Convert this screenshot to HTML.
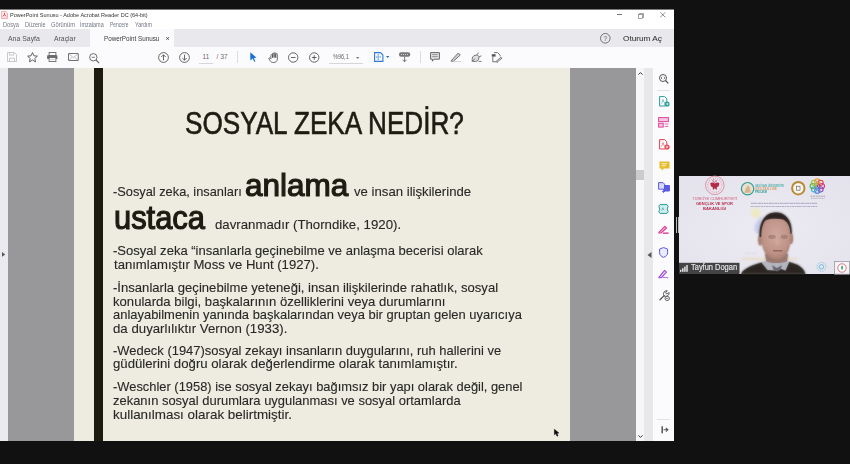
<!DOCTYPE html>
<html><head><meta charset="utf-8">
<style>
*{margin:0;padding:0;box-sizing:border-box}
html,body{width:850px;height:464px;overflow:hidden;background:#111111;font-family:"Liberation Sans",sans-serif}
.a{position:absolute}
.t{position:absolute;white-space:nowrap;transform-origin:0 0;line-height:1}
svg{position:absolute;overflow:visible}
</style></head><body>
<!-- app window -->
<div class="a" style="left:0;top:9px;width:674px;height:1px;background:#7a7a7a"></div>
<div class="a" style="left:0;top:10px;width:674px;height:19px;background:#ffffff"></div>
<div class="a" style="left:0;top:29px;width:674px;height:18px;background:#e9e8ec"></div>
<div class="a" style="left:90px;top:29px;width:84px;height:18px;background:#fbfbfd"></div>
<div class="a" style="left:0;top:47px;width:674px;height:21px;background:#fbfbfd"></div>
<div class="a" style="left:0;top:68px;width:8px;height:373px;background:#ebeaee"></div>
<div class="a" style="left:8px;top:68px;width:628px;height:373px;background:#98979a"></div>
<div class="a" style="left:636px;top:68px;width:8px;height:373px;background:#f6f6f8"></div>
<div class="a" style="left:636px;top:170px;width:7.5px;height:9.5px;background:#cbcbcd"></div>
<div class="a" style="left:644px;top:68px;width:9px;height:373px;background:#e8e7ea"></div>
<div class="a" style="left:653px;top:68px;width:21px;height:373px;background:#fbfbfd"></div>
<!-- slide -->
<div class="a" style="left:74px;top:68px;width:496px;height:373px;background:#eeece1"></div>
<div class="a" style="left:94px;top:68px;width:9px;height:373px;background:#1c1b0f"></div>
<div id="slidetext">
<div class="t" style="left:113.05px;top:184.80px;font-size:13.5px;transform:scaleX(0.9478);color:#282826;-webkit-text-stroke:0.12px #282826">-Sosyal zeka, insanları</div>
<div class="t" style="left:244.98px;top:169.50px;font-size:31px;transform:scaleX(1.0168);color:#1d1c12;-webkit-text-stroke:1.2px #1d1c12">anlama</div>
<div class="t" style="left:353.50px;top:185.00px;font-size:13.5px;transform:scaleX(0.9758);color:#282826;-webkit-text-stroke:0.12px #282826">ve insan ilişkilerinde</div>
<div class="t" style="left:113.63px;top:200.70px;font-size:33px;transform:scaleX(0.9354);color:#1d1c12;-webkit-text-stroke:1.2px #1d1c12">ustaca</div>
<div class="t" style="left:214.52px;top:217.80px;font-size:13.5px;transform:scaleX(0.9803);color:#282826;-webkit-text-stroke:0.12px #282826">davranmadır (Thorndike, 1920).</div>
<div class="t" style="left:113.03px;top:244.30px;font-size:13.5px;transform:scaleX(0.9660);color:#282826;-webkit-text-stroke:0.12px #282826">-Sosyal zeka “insanlarla geçinebilme ve anlaşma becerisi olarak</div>
<div class="t" style="left:114.00px;top:258.40px;font-size:13.5px;transform:scaleX(0.9714);color:#282826;-webkit-text-stroke:0.12px #282826">tanımlamıştır Moss ve Hunt (1927).</div>
<div class="t" style="left:113.03px;top:281.00px;font-size:13.5px;transform:scaleX(0.9701);color:#282826;-webkit-text-stroke:0.12px #282826">-İnsanlarla geçinebilme yeteneği, insan ilişkilerinde rahatlık, sosyal</div>
<div class="t" style="left:113.03px;top:294.60px;font-size:13.5px;transform:scaleX(0.9712);color:#282826;-webkit-text-stroke:0.12px #282826">konularda bilgi, başkalarının özelliklerini veya durumlarını</div>
<div class="t" style="left:113.04px;top:308.20px;font-size:13.5px;transform:scaleX(0.9591);color:#282826;-webkit-text-stroke:0.12px #282826">anlayabilmenin yanında başkalarından veya bir gruptan gelen uyarıcıya</div>
<div class="t" style="left:113.02px;top:321.60px;font-size:13.5px;transform:scaleX(0.9807);color:#282826;-webkit-text-stroke:0.12px #282826">da duyarlılıktır Vernon (1933).</div>
<div class="t" style="left:113.04px;top:343.50px;font-size:13.5px;transform:scaleX(0.9584);color:#282826;-webkit-text-stroke:0.12px #282826">-Wedeck (1947)sosyal zekayı insanların duygularını, ruh hallerini ve</div>
<div class="t" style="left:113.02px;top:357.40px;font-size:13.5px;transform:scaleX(0.9772);color:#282826;-webkit-text-stroke:0.12px #282826">güdülerini doğru olarak değerlendirme olarak tanımlamıştır.</div>
<div class="t" style="left:113.05px;top:380.00px;font-size:13.5px;transform:scaleX(0.9546);color:#282826;-webkit-text-stroke:0.12px #282826">-Weschler (1958) ise sosyal zekayı bağımsız bir yapı olarak değil, genel</div>
<div class="t" style="left:113.04px;top:393.90px;font-size:13.5px;transform:scaleX(0.9591);color:#282826;-webkit-text-stroke:0.12px #282826">zekanın sosyal durumlara uygulanması ve sosyal ortamlarda</div>
<div class="t" style="left:113.01px;top:407.50px;font-size:13.5px;transform:scaleX(0.9938);color:#282826;-webkit-text-stroke:0.12px #282826">kullanılması olarak belirtmiştir.</div>
<div class="t" style="left:185.37px;top:107.80px;font-size:31.5px;transform:scaleX(0.8296);color:#1d1c12;-webkit-text-stroke:0.6px #1d1c12">SOSYAL ZEKA NEDİR?</div>
</div>
<!-- CHROME -->
<div class="t" style="left:9.50px;top:12.60px;font-size:5.5px;transform:scaleX(1.0055);color:#333333">PowerPoint Sunusu - Adobe Acrobat Reader DC (64-bit)</div>
<div class="t" style="left:2.86px;top:21.55px;font-size:6.3px;transform:scaleX(0.8857);color:#737786">Dosya</div>
<div class="t" style="left:24.56px;top:21.55px;font-size:6.3px;transform:scaleX(0.8899);color:#737786">Düzenle</div>
<div class="t" style="left:50.57px;top:21.55px;font-size:6.3px;transform:scaleX(0.9137);color:#737786">Görünüm</div>
<div class="t" style="left:80.47px;top:21.55px;font-size:6.3px;transform:scaleX(0.8673);color:#737786">İmzalama</div>
<div class="t" style="left:110.40px;top:21.55px;font-size:6.3px;transform:scaleX(0.7912);color:#737786">Pencere</div>
<div class="t" style="left:135.09px;top:21.55px;font-size:6.3px;transform:scaleX(0.8571);color:#737786">Yardım</div>
<div class="t" style="left:8.00px;top:34.65px;font-size:7.5px;transform:scaleX(0.9209);color:#555555">Ana Sayfa</div>
<div class="t" style="left:54.10px;top:34.65px;font-size:7.5px;transform:scaleX(0.9137);color:#555555">Araçlar</div>
<div class="t" style="left:104.24px;top:35.85px;font-size:6.8px;transform:scaleX(0.9260);color:#3a3a3a">PowerPoint Sunusu</div>
<div class="t" style="left:623.42px;top:34.75px;font-size:7.4px;transform:scaleX(1.1101);color:#3a3a3a;-webkit-text-stroke:0.1px #3a3a3a">Oturum Aç</div>


<!-- title bar -->
<svg style="left:1px;top:11px" width="7" height="8" viewBox="0 0 7 8"><path d="M0.6 0.5h4.3l1.6 1.6v5.4h-5.9z" fill="#fff4f4" stroke="#f4a0a4" stroke-width="0.9"/><path d="M3.5 1.8L3.5 3.8M3.5 3.8L1.7 5.3M3.5 3.8L5.3 5.3" stroke="#e8403f" stroke-width="1"/><path d="M1.5 6.3h4" stroke="#f8c8c8" stroke-width="0.6"/></svg>
<div class="a" style="left:616.5px;top:14.3px;width:5px;height:0.7px;background:#777"></div>
<svg style="left:638px;top:12.5px" width="6" height="6" viewBox="0 0 6 6"><rect x="0.5" y="1.5" width="4" height="4" fill="none" stroke="#666" stroke-width="0.6"/><path d="M1.5 1.5V0.5h4v4h-1" fill="none" stroke="#666" stroke-width="0.6"/></svg>
<svg style="left:660px;top:12.3px" width="6" height="6" viewBox="0 0 6 6"><path d="M0.3 0.3L5.3 5.3M5.3 0.3L0.3 5.3" stroke="#555" stroke-width="0.65"/></svg>
<!-- menu -->
<!-- tabs -->
<svg style="left:166.4px;top:36.8px" width="3.2" height="3" viewBox="0 0 3.2 3"><path d="M0.2 0.2L3 2.8M3 0.2L0.2 2.8" stroke="#333" stroke-width="0.75"/></svg>
<svg style="left:599.5px;top:33px" width="11" height="11" viewBox="0 0 11 11"><circle cx="5.3" cy="5.3" r="4.8" fill="none" stroke="#555" stroke-width="0.8"/><text x="5.3" y="7.6" font-size="6.5" text-anchor="middle" fill="#555" font-family="Liberation Sans">?</text></svg>
<!-- toolbar -->
<svg style="left:6.5px;top:52.3px" width="10" height="10" viewBox="0 0 10 10"><path d="M0.5 0.5h7l2 2v7h-9z" fill="none" stroke="#c4c4c8" stroke-width="0.9"/><path d="M2.5 0.5v2.6h4.4v-2.6M2.5 9.5v-3.3h5v3.3" fill="none" stroke="#c4c4c8" stroke-width="0.9"/></svg>
<svg style="left:26.5px;top:51.8px" width="11" height="11" viewBox="0 0 11 11"><path d="M5.5 0.6l1.45 3.2l3.45 .35l-2.6 2.3l.75 3.4l-3.05-1.8l-3.05 1.8l.75-3.4l-2.6-2.3l3.45-.35z" fill="none" stroke="#555" stroke-width="0.9" stroke-linejoin="round"/></svg>
<svg style="left:47px;top:52px" width="11" height="10" viewBox="0 0 11 10"><rect x="2.1" y="0.5" width="6.8" height="3" fill="#fbfbfd" stroke="#6a6a6a" stroke-width="0.9"/><rect x="0.1" y="3.3" width="10.3" height="3.8" rx="0.6" fill="#6a6a6a"/><rect x="2.1" y="5.5" width="6.8" height="4" fill="#fbfbfd" stroke="#6a6a6a" stroke-width="0.9"/><path d="M3.5 7.4h4" stroke="#aaa" stroke-width="0.6"/></svg>
<svg style="left:68px;top:53px" width="11" height="8" viewBox="0 0 11 8"><rect x="0.5" y="0.5" width="9.8" height="7" rx="0.3" fill="none" stroke="#6a6a6a" stroke-width="0.95"/><path d="M1 1L5.4 4.6L9.8 1M1 7.2L4 4.2M9.8 7.2L6.8 4.2" fill="none" stroke="#8a8a8a" stroke-width="0.55"/></svg>
<svg style="left:89px;top:52.5px" width="11" height="11" viewBox="0 0 11 11"><circle cx="4.3" cy="4.3" r="3.7" fill="none" stroke="#666" stroke-width="0.95"/><path d="M2.6 4.3h3.4" stroke="#666" stroke-width="0.8"/><path d="M7 7l3.2 3.2" stroke="#666" stroke-width="1.1"/></svg>
<svg style="left:158px;top:52px" width="11" height="11" viewBox="0 0 11 11"><circle cx="5.5" cy="5.5" r="4.9" fill="none" stroke="#555" stroke-width="0.9"/><path d="M5.5 8.3V2.8M3.3 5L5.5 2.8L7.7 5" fill="none" stroke="#555" stroke-width="0.9"/></svg>
<svg style="left:178.8px;top:52px" width="11" height="11" viewBox="0 0 11 11"><circle cx="5.5" cy="5.5" r="4.9" fill="none" stroke="#555" stroke-width="0.9"/><path d="M5.5 2.7V8.2M3.3 6L5.5 8.2L7.7 6" fill="none" stroke="#555" stroke-width="0.9"/></svg>
<div class="t" style="left:202.6px;top:53.8px;font-size:6.3px;color:#666">11</div>
<div class="a" style="left:199px;top:63.2px;width:14px;height:0.6px;background:#d6d6da"></div>
<div class="t" style="left:216.6px;top:53.8px;font-size:6.3px;color:#666">/</div>
<div class="t" style="left:220.6px;top:53.8px;font-size:6.3px;color:#666">37</div>
<div class="a" style="left:237.3px;top:51px;width:0.6px;height:12px;background:#dcdce0"></div>
<svg style="left:249.5px;top:52.3px" width="7" height="10" viewBox="0 0 7 10"><path d="M0.3 0.2L6.5 5.8L3.9 6L5.3 9.2L4.1 9.7L2.8 6.6L0.3 8.6z" fill="#1a6fd6"/></svg>
<svg style="left:267.5px;top:51.5px" width="11" height="11" viewBox="0 0 11 11"><path d="M2.9 7V3.4a.8 .8 0 0 1 1.6 0V5.6V1.9a.8 .8 0 0 1 1.6 0V5.6V1.5a.8 .8 0 0 1 1.6 0V5.6V2.3a.8 .8 0 0 1 1.6 0V7c0 2-1.4 3.5-3.4 3.5h-.8c-1.4 0-2.2-.6-3-1.8L.9 6.8c-.4-.7.4-1.3 1-.7z" fill="none" stroke="#555" stroke-width="0.85" stroke-linejoin="round"/></svg>
<svg style="left:288px;top:52px" width="11" height="11" viewBox="0 0 11 11"><circle cx="5.2" cy="5.5" r="4.7" fill="none" stroke="#555" stroke-width="0.9"/><path d="M2.9 5.5h4.6" stroke="#555" stroke-width="0.9"/></svg>
<svg style="left:309px;top:52px" width="11" height="11" viewBox="0 0 11 11"><circle cx="5.2" cy="5.5" r="4.7" fill="none" stroke="#555" stroke-width="0.9"/><path d="M2.9 5.5h4.6M5.2 3.2v4.6" stroke="#555" stroke-width="0.9"/></svg>
<div class="t" style="left:333px;top:53.8px;font-size:6.3px;color:#666;transform:scaleX(0.88)">%96,1</div>
<svg style="left:356px;top:56.5px" width="4" height="3" viewBox="0 0 4 3"><path d="M0 0h3.4L1.7 2z" fill="#777"/></svg>
<div class="a" style="left:329.4px;top:63px;width:34px;height:0.6px;background:#d6d6da"></div>
<svg style="left:374px;top:52px" width="10" height="10" viewBox="0 0 10 10"><path d="M0.6 0.6h5.8l2.5 2.5v6.3h-8.3z" fill="none" stroke="#2a7ad8" stroke-width="1.1"/><path d="M3.4 2.9h1.6M2 5h1.4M5.4 5h1.6M3.4 7.2h1.6M4.2 3.8v2.6" stroke="#2a7ad8" stroke-width="0.8"/></svg>
<svg style="left:385.5px;top:56.3px" width="4" height="3" viewBox="0 0 4 3"><path d="M0 0h3.4L1.7 2z" fill="#1a6fd6"/></svg>
<svg style="left:398.8px;top:52px" width="12" height="11" viewBox="0 0 12 11"><rect x="0" y="0.2" width="11.2" height="4.6" rx="2" fill="#777"/><path d="M2.2 2.5h.8M4.2 2.5h.8M6.2 2.5h.8M8.2 2.5h.8" stroke="#e8e8e8" stroke-width="1"/><path d="M5.6 4.8v5M3.6 7.8L5.6 9.8L7.6 7.8" fill="none" stroke="#666" stroke-width="0.9"/></svg>
<div class="a" style="left:419.8px;top:51px;width:0.6px;height:12px;background:#dcdce0"></div>
<svg style="left:430.2px;top:51.8px" width="10" height="10" viewBox="0 0 10 10"><path d="M0.6 0.6h8.8v6.6h-5.4l-1.6 2v-2h-1.8z" fill="#e4e4e6" stroke="#666" stroke-width="1"/><path d="M2.2 2.6h5.6M2.2 4.6h5.6" stroke="#888" stroke-width="0.9"/></svg>
<svg style="left:450px;top:51.8px" width="12" height="10" viewBox="0 0 12 10"><path d="M1.5 8.3L8.3 1l2 2L3.5 9.2H1.2z" fill="#cfcfd2" stroke="#666" stroke-width="0.9" stroke-linejoin="round"/><path d="M3.5 9.6h7.5" stroke="#cfcfd2" stroke-width="0.9"/></svg>
<svg style="left:470.6px;top:51.8px" width="11" height="10" viewBox="0 0 11 10"><path d="M1.3 9.3c-.3-2.4 0-4.3 1.6-5.6l3.3-.9l2 2l-1 3.3c-1.3 1.5-3.3 1.6-5.9 1.2zM1.3 9.3l2.8-2.8M6.2 2.8L7.5 .6M8.2 4.8l2.2-1" fill="#e0e0e2" stroke="#666" stroke-width="0.9" stroke-linejoin="round"/><path d="M7.5 9.4h3" stroke="#666" stroke-width="0.9"/></svg>
<svg style="left:491px;top:51.8px" width="12" height="11" viewBox="0 0 12 11"><path d="M1.8 4.5V9.8h5M3 .6h3.6l2.6 2.6v1.2" fill="none" stroke="#666" stroke-width="0.9"/><rect x="0.8" y="2.2" width="3.8" height="2.4" fill="#555"/><path d="M5 9.4l5-4.2l1 1l-5 4.2z" fill="#ddd" stroke="#666" stroke-width="0.8"/></svg>
<!-- right panel -->
<svg style="left:638px;top:72px" width="5" height="3" viewBox="0 0 5 3"><path d="M0.5 2.6L2.5 0.6L4.5 2.6" fill="none" stroke="#333" stroke-width="1"/></svg>
<svg style="left:638px;top:435px" width="5" height="3" viewBox="0 0 5 3"><path d="M0.5 0.4L2.5 2.4L4.5 0.4" fill="none" stroke="#333" stroke-width="1"/></svg>
<svg style="left:646.5px;top:251.5px" width="5" height="6" viewBox="0 0 5 6"><path d="M4.5 0L0.5 3L4.5 6z" fill="#555"/></svg>
<svg style="left:2.4px;top:252px" width="4" height="5" viewBox="0 0 4 5"><path d="M0 0L3.2 2.4L0 4.8z" fill="#555"/></svg>
<div class="a" style="left:656.7px;top:89.8px;width:13px;height:0.8px;background:#e2e2e6"></div>
<div class="a" style="left:656.7px;top:418.5px;width:13px;height:0.8px;background:#e2e2e6"></div>
<svg style="left:659px;top:74.3px" width="10" height="10" viewBox="0 0 10 10"><circle cx="4" cy="4" r="3.5" fill="none" stroke="#555" stroke-width="1"/><path d="M6.5 6.5L9.3 9.3" stroke="#555" stroke-width="1.2"/><path d="M3.1 2.8L2.1 4L3.1 5.2M4.9 2.8L5.9 4L4.9 5.2" fill="none" stroke="#555" stroke-width="0.7"/></svg>
<svg style="left:658.5px;top:95.5px" width="11" height="11" viewBox="0 0 11 11"><path d="M0.6 0.6h5l2.2 2.2v3M6 10H0.6V0.6" fill="none" stroke="#2c9a9a" stroke-width="1"/><path d="M2.5 7.5c.8-1.2 1.4-2.6 1.5-4c.2 1.2.6 2.3 1.6 3.2" fill="none" stroke="#2c9a9a" stroke-width="0.6"/><circle cx="8" cy="8" r="2.6" fill="#2c9a9a"/><path d="M6.7 8h2.4M8.2 7l1 1l-1 1" fill="none" stroke="#fff" stroke-width="0.7"/></svg>
<svg style="left:657.8px;top:117.4px" width="11" height="11" viewBox="0 0 11 11"><rect x="0.6" y="0.6" width="9.8" height="4" fill="#f6c6e0" stroke="#e0449a" stroke-width="1"/><rect x="0.6" y="6.3" width="4.6" height="3.8" fill="#f6c6e0" stroke="#e0449a" stroke-width="1"/><path d="M6.8 7h3.6M6.8 9.4h3.6" stroke="#e0449a" stroke-width="0.8"/></svg>
<svg style="left:658.5px;top:138.7px" width="11" height="11" viewBox="0 0 11 11"><path d="M0.6 0.6h5l2.2 2.2v3M6 10H0.6V0.6" fill="none" stroke="#e2404e" stroke-width="1"/><path d="M2.5 7.5c.8-1.2 1.4-2.6 1.5-4c.2 1.2.6 2.3 1.6 3.2" fill="none" stroke="#e2404e" stroke-width="0.6"/><circle cx="8" cy="8" r="2.6" fill="#e2404e"/><path d="M6.6 8h2.8M8 6.6v2.8" fill="none" stroke="#fff" stroke-width="0.7"/></svg>
<svg style="left:658.5px;top:160.9px" width="11" height="10" viewBox="0 0 11 10"><path d="M0.5 0.5h10v7h-5.5l-2.5 2.3v-2.3h-2z" fill="#e6bc2a"/><path d="M2.6 2.8h5.5M2.6 4.8h4" stroke="#fff" stroke-width="0.8"/></svg>
<svg style="left:658px;top:181.5px" width="12" height="11" viewBox="0 0 12 11"><path d="M0.6 0.6h4.4l1.6 1.6v5h-6z" fill="#d9d9ff" stroke="#5a5ae0" stroke-width="1"/><path d="M6 3.5h5.4v5.5H6" fill="#5a5ae0" stroke="#5a5ae0" stroke-width="1"/><path d="M5.5 7v3.5M4 9l1.5 1.5L7 9" fill="none" stroke="#5a5ae0" stroke-width="0.9"/></svg>
<svg style="left:658px;top:203.8px" width="11" height="10" viewBox="0 0 11 10"><path d="M2 0.6h7l1.2 1.6L9.2 5l1 2.6L9 9.4H2L0.8 7.6L1.8 5L0.8 2.2z" fill="#d2efef" stroke="#2c9a9a" stroke-width="1"/><path d="M3.6 6.8c.6-1 1.1-2.1 1.2-3.2c.2 1 .5 1.9 1.4 2.6" fill="none" stroke="#2c9a9a" stroke-width="0.6"/></svg>
<svg style="left:658px;top:225.4px" width="11" height="9" viewBox="0 0 11 9"><path d="M0.9 7.4L6.8 1.3l1.7 1.7L3 8H0.9z" fill="#f8c0dc" stroke="#e0449a" stroke-width="1.2" stroke-linejoin="round"/><path d="M5 8.2h5.6" stroke="#e0449a" stroke-width="1.5"/></svg>
<svg style="left:659px;top:246.8px" width="10" height="11" viewBox="0 0 10 11"><path d="M4.6 0.6L8.6 2v3.8c0 2.2-1.8 3.8-4 4.6c-2.2-.8-4-2.4-4-4.6V2z" fill="#ececff" stroke="#5a5ae0" stroke-width="1"/></svg>
<svg style="left:658px;top:268px" width="11" height="11" viewBox="0 0 11 11"><path d="M0.9 9.3L6.6 2.4l1.9 1.7L3 9.8H0.9z" fill="#efe0fb" stroke="#9b45d6" stroke-width="1.1" stroke-linejoin="round"/><path d="M4.6 9.9c.7-.9 1.2-.9 1.6 0c.5-.9 1-.9 1.5 0c.4-.6.9-.6 1.4-.1h1.2" fill="none" stroke="#9b45d6" stroke-width="0.9"/></svg>
<svg style="left:658.5px;top:289.8px" width="11" height="11" viewBox="0 0 11 11"><path d="M1 9.8L5.2 5.6" stroke="#555" stroke-width="1.3" stroke-linecap="round"/><path d="M5 5.8C4 4.3 4.4 2.2 6 1.2C6.8 .7 7.6 .6 8.3 .8L6.8 2.3l.3 1.3l1.3.3L9.9 2.4c.3 1 0 2.2-.8 3C8 6.5 6.4 6.7 5 5.8z" fill="none" stroke="#555" stroke-width="1"/><circle cx="8.2" cy="8.4" r="2.2" fill="#fbfbfd" stroke="#555" stroke-width="0.9"/><path d="M7.1 8.4h2.2" stroke="#555" stroke-width="0.8"/></svg>
<svg style="left:660.8px;top:425.8px" width="8" height="8" viewBox="0 0 8 8"><path d="M1.2 0.2v7" stroke="#555" stroke-width="1.5"/><path d="M2.6 3.8h4.2M4.9 2L6.9 3.8L4.9 5.6" fill="none" stroke="#555" stroke-width="1.05"/></svg>
<!-- splitter grip -->
<div class="a" style="left:675.5px;top:217px;width:0.8px;height:16px;background:#bbb"></div>
<div class="a" style="left:677.5px;top:217px;width:0.8px;height:16px;background:#bbb"></div>
<!-- mouse cursor -->
<svg style="left:553.5px;top:429.3px" width="6" height="8" viewBox="0 0 6 8"><path d="M0.4 0.3L0.4 5.8L1.8 4.6L3 7.2L4 6.7L2.9 4.2L4.9 4.1z" fill="#0a0a0a" stroke="#0a0a0a" stroke-width="0.5" stroke-linejoin="round"/></svg>

<!-- VIDEO -->
<svg style="left:679px;top:176px" width="171" height="98" viewBox="0 0 171 98">
<defs>
<filter id="bl" x="-20%" y="-20%" width="140%" height="140%"><feGaussianBlur stdDeviation="0.45"/></filter>
<filter id="bl2" x="-50%" y="-50%" width="200%" height="200%"><feGaussianBlur stdDeviation="1.2"/></filter>
<radialGradient id="skin" cx="0.5" cy="0.42" r="0.6"><stop offset="0" stop-color="#cfa89e"/><stop offset="0.7" stop-color="#c09488"/><stop offset="1" stop-color="#a47c72"/></radialGradient>
<filter id="bl3" x="-20%" y="-20%" width="140%" height="140%"><feGaussianBlur stdDeviation="0.8"/></filter>
<radialGradient id="bg" cx="0.5" cy="0.55" r="0.7"><stop offset="0" stop-color="#ecebf2"/><stop offset="1" stop-color="#e4e2ec"/></radialGradient>
</defs>
<rect x="0" y="0" width="171" height="98" fill="url(#bg)"/>
<g filter="url(#bl)">
<!-- emblem -->
<circle cx="35.8" cy="9.3" r="9.3" fill="none" stroke="#d88098" stroke-width="0.8"/>
<circle cx="35.8" cy="9.3" r="7" fill="none" stroke="#e8a8b8" stroke-width="1.4" stroke-dasharray="0.9 1.3"/>
<path d="M31.2 7.2c1.5-1 3.3-.6 4.6.4c1.3-1 3.1-1.4 4.6-.4l-.8 3.3l-1.6.6l-.4 3l-1.8-1.8l-1.8 1.8l-.4-3l-1.6-.6z" fill="#b52a4a"/>
<path d="M34.6 3.4a1.6 1.6 0 1 0 2.4 .6" fill="none" stroke="#b52a4a" stroke-width="0.7"/>
<text x="35.8" y="23.6" font-size="3.6" text-anchor="middle" fill="#cf5a78" font-family="Liberation Sans" textLength="45" lengthAdjust="spacingAndGlyphs">TÜRKİYE CUMHURİYETİ</text>
<text x="35.5" y="28.9" font-size="4" font-weight="bold" text-anchor="middle" fill="#b8304e" font-family="Liberation Sans" textLength="37" lengthAdjust="spacingAndGlyphs">GENÇLİK VE SPOR</text>
<text x="35.6" y="33.6" font-size="4.3" font-weight="bold" text-anchor="middle" fill="#b8304e" font-family="Liberation Sans" textLength="23" lengthAdjust="spacingAndGlyphs">BAKANLIĞI</text>
<!-- teal logo -->
<circle cx="68.6" cy="12.7" r="6.2" fill="#e8e0d0" stroke="#2a9d96" stroke-width="1.2"/>
<path d="M65.5 17c.5-3 1.5-6 3.5-7.5c1.5 1 2.5 3.5 2.7 7" fill="#d9b48a"/>
<text x="76" y="10.6" font-size="2.6" font-weight="bold" fill="#3aa8a0" opacity="0.85" font-family="Liberation Sans" textLength="29" lengthAdjust="spacingAndGlyphs">GELİYAN ÜNİVERSİTE</text>
<text x="76" y="13.8" font-size="2.6" font-weight="bold" fill="#d7a070" font-family="Liberation Sans" textLength="22" lengthAdjust="spacingAndGlyphs">GELİYAN LİSE</text>
<text x="76" y="17" font-size="2.6" font-weight="bold" fill="#2a9d96" font-family="Liberation Sans" textLength="12" lengthAdjust="spacingAndGlyphs">PROJESİ</text>
<!-- gold logo -->
<circle cx="119.3" cy="12.2" r="6.2" fill="#fbf7ee" stroke="#b98a35" stroke-width="2"/>
<rect x="117.6" y="10.2" width="3.4" height="4" fill="none" stroke="#555" stroke-width="0.6"/>
<!-- flower logo -->
<circle cx="138.30" cy="5.50" r="2.6" fill="none" stroke="#f0a030" stroke-width="1.1"/><circle cx="141.55" cy="6.85" r="2.6" fill="none" stroke="#e04848" stroke-width="1.1"/><circle cx="142.90" cy="10.10" r="2.6" fill="none" stroke="#d03a80" stroke-width="1.1"/><circle cx="141.55" cy="13.35" r="2.6" fill="none" stroke="#8a50c0" stroke-width="1.1"/><circle cx="138.30" cy="14.70" r="2.6" fill="none" stroke="#4a7ae0" stroke-width="1.1"/><circle cx="135.05" cy="13.35" r="2.6" fill="none" stroke="#40b0d0" stroke-width="1.1"/><circle cx="133.70" cy="10.10" r="2.6" fill="none" stroke="#50b050" stroke-width="1.1"/><circle cx="135.05" cy="6.85" r="2.6" fill="none" stroke="#a0c040" stroke-width="1.1"/>
<circle cx="138.3" cy="10.1" r="1" fill="#555"/>
<path d="M131.5 20.2h14.5" stroke="#8a8a98" stroke-width="1" stroke-dasharray="2 0.6" opacity="0.7"/>
<path d="M132 22.3h13.5" stroke="#8a8a98" stroke-width="0.9" stroke-dasharray="1.5 0.6" opacity="0.6"/>
<!-- two lines -->
<path d="M72 27.4h66" stroke="#3a3a70" stroke-width="1.1" stroke-dasharray="1.8 .5 2.5 .5 1.2 .6 3 .6" opacity="0.32"/>
<path d="M71.5 30.5h67" stroke="#3a3a70" stroke-width="1.1" stroke-dasharray="2.4 .5 1.4 .6 2.8 .5 1.6 .6" opacity="0.32"/>
</g>
<g filter="url(#bl2)">
<circle cx="76.8" cy="37" r="5" fill="#efe8c4"/>
<path d="M83 40c-3 2-6 6-7.5 11c-.5 3 1 5.5 3 7l2.5-.5c-1-3-1-6 .5-9z" fill="#c6cbe8"/>
<rect x="63" y="82.2" width="55" height="1.6" fill="#e8d8b8"/>
<rect x="66" y="77" width="12" height="1" fill="#d8d8e4"/>
</g>
<g filter="url(#bl3)">
<!-- man -->
<path d="M62 98C64 94 70 90.5 78 88L83 86.5L97 95L110 86L116 88C122 90 125 94 126.5 98Z" fill="#2c2521"/>
<path d="M86 78L87.5 85.5C92 88.5 104 88.5 108 85.5L109 78Z" fill="#9a776e"/>
<path d="M82.7 86.8L86 85C90 87.8 104 87.8 109 85L110 86.8L106.5 94.5L98 91.5L95.5 94.5L88.5 94Z" fill="#b4b6c0"/>
<path d="M93 89L98 92L103 89L101.5 94L98 95.5L94.5 94Z" fill="#6a6670"/>
<ellipse cx="81.2" cy="64" rx="2" ry="5.5" fill="#a98278"/>
<ellipse cx="112" cy="62.5" rx="2" ry="5.5" fill="#a98278"/>
<path d="M81.8 50C81.3 61 82.5 69 85.5 75.5C88.5 81 93 83.8 98.5 83.8C103 83.8 106.5 80.5 109 75C111.5 69 112.3 60 111.8 50C109 44 104 42 97 42C90 42 84.5 44 81.8 50Z" fill="url(#skin)"/>
<path d="M80.6 61C79.5 46 86.5 36.5 96.5 36.5C107 36.5 113.5 45 112.6 58L111.3 57.5C111.2 51 109 46 104 43.5C99 42.5 92 42.5 87 44C84 46.5 82.3 52 82.2 61Z" fill="#2a2220"/>
</g>
<g opacity="0.7">
<!-- man -->
<path d="M62 98C64 94 70 90.5 78 88L83 86.5L97 95L110 86L116 88C122 90 125 94 126.5 98Z" fill="#2c2521"/>
<path d="M86 78L87.5 85.5C92 88.5 104 88.5 108 85.5L109 78Z" fill="#9a776e"/>
<path d="M82.7 86.8L86 85C90 87.8 104 87.8 109 85L110 86.8L106.5 94.5L98 91.5L95.5 94.5L88.5 94Z" fill="#b4b6c0"/>
<path d="M93 89L98 92L103 89L101.5 94L98 95.5L94.5 94Z" fill="#6a6670"/>
<ellipse cx="81.2" cy="64" rx="2" ry="5.5" fill="#a98278"/>
<ellipse cx="112" cy="62.5" rx="2" ry="5.5" fill="#a98278"/>
<path d="M81.8 50C81.3 61 82.5 69 85.5 75.5C88.5 81 93 83.8 98.5 83.8C103 83.8 106.5 80.5 109 75C111.5 69 112.3 60 111.8 50C109 44 104 42 97 42C90 42 84.5 44 81.8 50Z" fill="url(#skin)"/>
<path d="M80.6 61C79.5 46 86.5 36.5 96.5 36.5C107 36.5 113.5 45 112.6 58L111.3 57.5C111.2 51 109 46 104 43.5C99 42.5 92 42.5 87 44C84 46.5 82.3 52 82.2 61Z" fill="#2a2220"/>
</g>
<g opacity="0.9">
<ellipse cx="93" cy="60.8" rx="3.8" ry="2.1" fill="#8a625a" opacity="0.5"/>
<ellipse cx="105.2" cy="60.8" rx="3.6" ry="2.1" fill="#8a625a" opacity="0.5"/>
<ellipse cx="98.4" cy="66" rx="2.2" ry="3" fill="#d2a69c"/>
<path d="M94 74.8h9.5" stroke="#8a5a56" stroke-width="1.3"/>
</g>

<!-- blue flower -->
<g filter="url(#bl)" transform="translate(142.5 90.8)">
<circle r="4.4" fill="none" stroke="#58b8d8" stroke-width="0.7" stroke-dasharray="1 0.8"/>
<circle r="2.2" fill="none" stroke="#58b8d8" stroke-width="0.8"/>
</g>
<rect x="155.5" y="85.6" width="15" height="12.6" fill="#f4f4f6" stroke="#9a9aa0" stroke-width="0.8"/>
<circle cx="163" cy="92" r="4.2" fill="#fff" stroke="#c04050" stroke-width="0.7" filter="url(#bl)"/>
<rect x="162.3" y="89.8" width="1.5" height="3.6" fill="#2a9a70" filter="url(#bl)"/>
<!-- label -->
<rect x="0" y="86.8" width="60.5" height="11.2" fill="#3a3a3c" opacity="0.95"/>
<rect x="1" y="93.8" width="1.4" height="2" fill="#ededed"/>
<rect x="3.1" y="92.2" width="1.4" height="3.6" fill="#ededed"/>
<rect x="5.2" y="90.6" width="1.4" height="5.2" fill="#ededed"/>
<rect x="7.3" y="89" width="1.4" height="6.8" fill="#ededed"/>
</svg>


<div class="t" style="left:691.20px;top:264.25px;font-size:8.2px;transform:scaleX(0.9114);color:#e8e8e8;-webkit-text-stroke:0.15px #e8e8e8">Tayfun Dogan</div>
</body></html>
